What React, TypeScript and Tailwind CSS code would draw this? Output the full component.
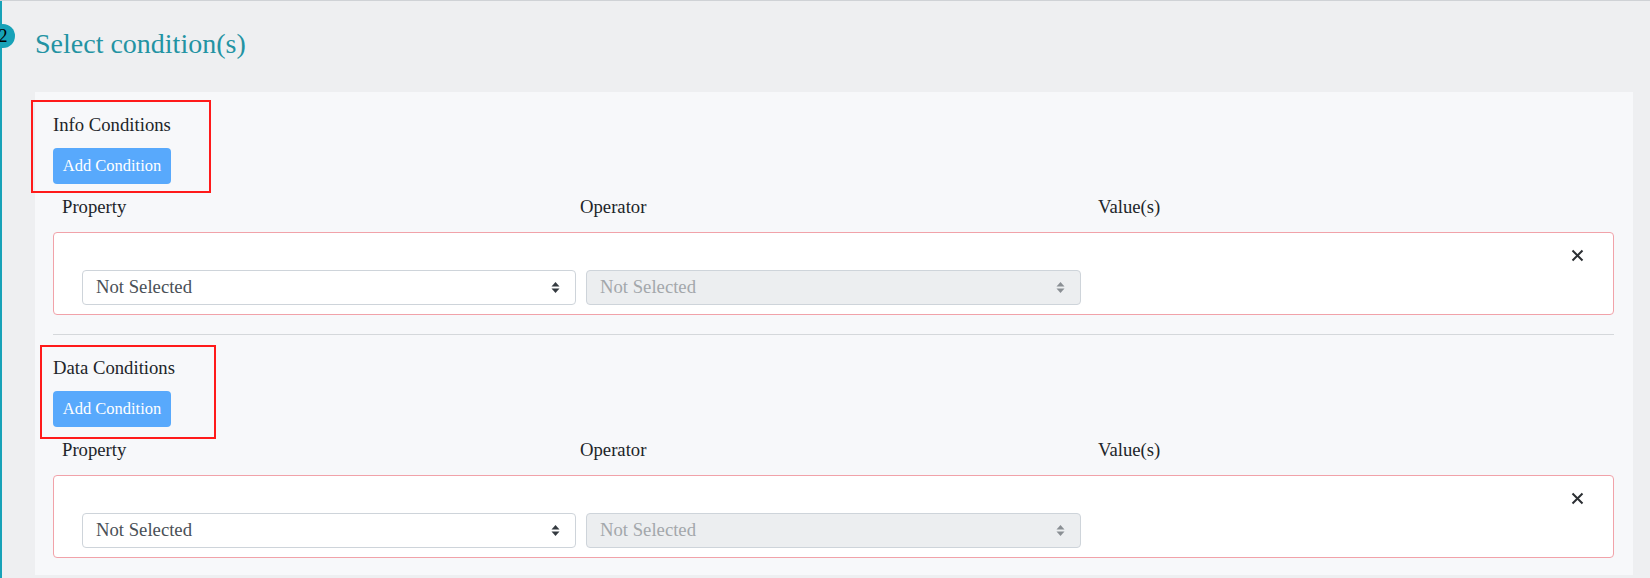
import React from 'react';

const serif = { fontFamily: '"Liberation Serif", "Times New Roman", serif' };

function SelectArrows({ muted }: { muted?: boolean }) {
  const fill = muted ? '#8a8f94' : '#343a40';
  return (
    <svg width="9" height="13" viewBox="0 0 9 13" className="shrink-0">
      <path d="M4.5 1 L8.5 5.5 L0.5 5.5 Z" fill={fill} />
      <path d="M4.5 12 L8.5 7.5 L0.5 7.5 Z" fill={fill} />
    </svg>
  );
}

function FakeSelect({ disabled, width }: { disabled?: boolean; width: string }) {
  return (
    <div
      className={`${width} h-[35px] flex items-center justify-between pl-[13px] pr-[15px] rounded-[4px] border border-[#ced4da] ${
        disabled ? 'bg-[#eceef0] text-[#a3a7ab]' : 'bg-white text-[#495057]'
      }`}
    >
      <span className="text-[18.7px] leading-none">Not Selected</span>
      <SelectArrows muted={disabled} />
    </div>
  );
}

function ConditionSection({
  title,
  box,
  last,
}: {
  title: string;
  box: string;
  last?: boolean;
}) {
  return (
    <div className={`relative pt-[19px] ${last ? 'pb-[17px]' : 'pb-[19px] border-b border-[#d5d8db]'}`}>
      {/* annotation box */}
      <div className={`absolute border-2 border-[#ff1a1a] ${box}`} />

      <div className="h-[28px] leading-[28px] text-[18.7px] text-[#212529]">{title}</div>
      <button className="mt-[9px] h-[36px] w-[118px] rounded-[4px] bg-[#58a9fc] text-white text-[16.5px]">
        Add Condition
      </button>

      <div className="mt-[9px] flex h-[28px] items-center text-[18.7px] text-[#212529]">
        <div className="w-[518px] pl-[9px]">Property</div>
        <div className="w-[518px] pl-[9px]">Operator</div>
        <div className="w-[518px] pl-[9px]">Value(s)</div>
      </div>

      <div className="relative mt-[11px] rounded-[4px] border border-[#f1a2a9] bg-white pl-[28px] pt-[37px] pb-[9px]">
        <button className="absolute right-[29px] top-[16px] w-[13px] h-[13px] text-[#2b2f33]">
          <svg width="13" height="13" viewBox="0 0 13 13">
            <path d="M1.5 1.5 L11.5 11.5 M11.5 1.5 L1.5 11.5" stroke="currentColor" strokeWidth="2" />
          </svg>
        </button>
        <div className="flex gap-[10px]">
          <FakeSelect width="w-[494px]" />
          <FakeSelect width="w-[495px]" disabled />
        </div>
      </div>
    </div>
  );
}

export default function App() {
  return (
    <div className="relative w-[1650px] h-[578px] overflow-hidden bg-[#eeeff1] border-t border-[#cfd2d6]" style={serif}>
      {/* timeline rail */}
      <div className="absolute left-0 top-0 bottom-0 w-[2px] bg-[#17a2b8]" />
      <div className="absolute left-[-9px] top-[23px] w-[24px] h-[24px] rounded-full bg-[#17a2b8] flex items-center justify-center text-[18px] text-black">
        2
      </div>

      <div className="pl-[35px] pr-[17px]">
        <h2 className="mt-[27px] h-[32px] leading-[32px] text-[28px] text-[#2393a3]">Select condition(s)</h2>

        <div className="relative mt-[32px] bg-[#f7f8fa] pl-[18px] pr-[19px]">
          <ConditionSection title="Info Conditions" box="left-[-22px] top-[8px] w-[180px] h-[93px]" />
          <ConditionSection title="Data Conditions" box="left-[-13px] top-[10px] w-[176px] h-[94px]" last />
        </div>
      </div>
    </div>
  );
}
